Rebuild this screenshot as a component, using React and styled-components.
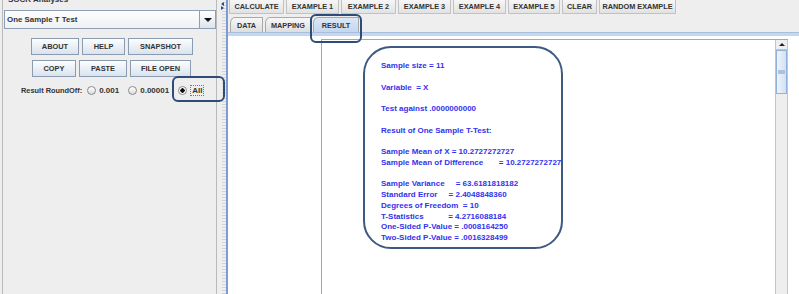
import React from 'react';
import styled, { createGlobalStyle } from 'styled-components';

const GlobalStyle = createGlobalStyle`
  body {
    margin: 0;
    background: #eeeeee;
    font-family: "Liberation Sans", Arial, sans-serif;
  }
`;

const Page = styled.div`
  position: relative;
  display: flex;
  width: 799px;
  height: 294px;
  overflow: hidden;
  background: #eeeeee;
`;

const LeftPanel = styled.div`
  width: 218px;
  flex: none;
  display: flex;
`;

const Fieldset = styled.div`
  margin-left: 2px;
  width: 213px;
  border-left: 1px solid #b9b9b9;
  border-right: 1px solid #b9b9b9;
  display: flex;
  flex-direction: column;
`;

const Legend = styled.div`
  height: 5px;
  overflow: hidden;
  padding-left: 5px;
  font-size: 8px;
  font-weight: bold;
  color: #333;
  & > span {
    display: block;
    margin-top: -5px;
    line-height: 10px;
  }
`;

const Combo = styled.div`
  margin: 5px 0 0 1px;
  height: 17px;
  display: flex;
  border: 1px solid #8e9fb3;
  background: linear-gradient(#fdfdfd, #eef1f5);
`;

const ComboText = styled.div`
  flex: 1;
  padding-left: 2px;
  font-size: 7.9px;
  font-weight: bold;
  line-height: 17px;
  color: #333;
`;

const ComboArrow = styled.div`
  width: 15px;
  border-left: 1px solid #8e9fb3;
  background: linear-gradient(#ffffff, #dbe4ee);
  display: flex;
  align-items: center;
  justify-content: center;
  &::after {
    content: '';
    border-left: 4px solid transparent;
    border-right: 4px solid transparent;
    border-top: 4px solid #111;
  }
`;

const ButtonRow = styled.div`
  display: flex;
  gap: ${p => p.$gap}px;
  padding-left: ${p => p.$left}px;
  margin-top: ${p => p.$top}px;
`;

const Button = styled.div`
  width: ${p => p.$w}px;
  height: 17px;
  box-sizing: border-box;
  border: 1px solid #8b9cb0;
  background: linear-gradient(#fcfdfe, #d9e3ee);
  font-size: 7.4px;
  font-weight: bold;
  color: #333;
  display: flex;
  align-items: center;
  justify-content: center;
`;

const RadioRow = styled.div`
  display: flex;
  align-items: center;
  margin-top: 7px;
  padding-left: 18px;
  height: 12px;
  font-size: 7.4px;
  font-weight: bold;
  color: #333;
`;

const RadioLabel = styled.span`
  margin-right: 5px;
`;

const Radio = styled.span`
  display: flex;
  align-items: center;
  gap: 3px;
  font-size: 8px;
  margin-right: ${p => p.$mr}px;
  &::before {
    content: '';
    width: 7px;
    height: 7px;
    border-radius: 50%;
    border: 1px solid #8a8a8a;
    background: ${p => (p.$on ? 'radial-gradient(circle, #111 0 2px, #fff 2.4px)' : 'linear-gradient(#fff, #dcdcdc)')};
  }
`;

const Focus = styled.span`
  border: 1px dotted ${p => (p.$on ? '#777' : 'transparent')};
  padding: 0 1px;
`;

const Splitter = styled.div`
  position: relative;
  width: 10px;
  flex: none;
  box-sizing: border-box;
  border-right: 2px solid #7b9bd2;
  background:
    repeating-linear-gradient(0deg, #d4d4d4 0 1px, transparent 1px 3px) 4px 0 / 4px 100% no-repeat,
    #eeeeee;
`;

const Arrow = styled.div`
  position: absolute;
  left: 3px;
  top: ${p => p.$top}px;
  width: 0;
  height: 0;
  border-top: 2px solid transparent;
  border-bottom: 2px solid transparent;
  ${p => (p.$dir === 'left' ? 'border-right: 3px solid #2a4a8a;' : 'border-left: 3px solid #2a4a8a;')}
`;

const RightPanel = styled.div`
  flex: 1;
  display: flex;
  flex-direction: column;
`;

const Toolbar = styled.div`
  display: flex;
  gap: 2px;
  height: 15px;
  padding-left: 1px;
`;

const ToolButton = styled.div`
  width: ${p => p.$w}px;
  height: 14px;
  box-sizing: border-box;
  border: 1px solid #c2c2c2;
  border-top: none;
  background: linear-gradient(#f6f6f6, #e2e2e2);
  font-size: 7.3px;
  font-weight: bold;
  color: #333;
  display: flex;
  align-items: center;
  justify-content: center;
`;

const TabStrip = styled.div`
  display: flex;
  align-items: flex-end;
  gap: 2px;
  height: 16px;
  padding-left: 2px;
  margin-top: 1px;
`;

const Tab = styled.div`
  width: ${p => p.$w}px;
  height: 15px;
  box-sizing: border-box;
  border: 1px solid #a9a9a9;
  border-bottom: none;
  border-top-left-radius: 5px 6px;
  background: ${p => (p.$active ? 'linear-gradient(#dbe8f6, #c3d7ee)' : 'linear-gradient(#f7f7f7, #dedede)')};
  font-size: 7.3px;
  font-weight: bold;
  color: #333;
  display: flex;
  align-items: center;
  justify-content: center;
`;

const TabLine = styled.div`
  height: 3px;
  background: #c3d7ee;
  border-top: 1px solid #a9bedb;
`;

const Content = styled.div`
  flex: 1;
  display: flex;
  background: #ffffff;
  padding: 3px 11px 0 93px;
`;

const ScrollPane = styled.div`
  flex: 1;
  display: flex;
  border-top: 1px solid #a8a8a8;
  border-left: 1px solid #a8a8a8;
`;

const Viewport = styled.div`
  flex: 1;
  padding: 6px 0 0 41px;
`;

const ResultBox = styled.div`
  width: 200px;
  height: 203px;
  box-sizing: border-box;
  border: 2px solid #3d5a82;
  border-radius: 28px;
  padding: 13px 0 0 16px;
`;

const ResultText = styled.pre`
  margin: 0;
  font-family: "Liberation Sans", Arial, sans-serif;
  font-size: 8px;
  font-weight: bold;
  line-height: 10.75px;
  color: #3232ef;
  white-space: pre;
`;

const Scrollbar = styled.div`
  width: 11px;
  display: flex;
  flex-direction: column;
  background: #eeeeee;
  border-left: 1px solid #b5c9e2;
  border-right: 1px solid #c6c6c6;
`;

const ScrollUp = styled.div`
  height: 9px;
  border-bottom: 1px solid #c6c6c6;
  display: flex;
  align-items: center;
  justify-content: center;
  &::after {
    content: '';
    border-left: 3px solid transparent;
    border-right: 3px solid transparent;
    border-bottom: 3px solid #222;
  }
`;

const Thumb = styled.div`
  height: 44px;
  box-sizing: border-box;
  border: 1px solid #8fb1da;
  background: linear-gradient(90deg, #eef4fb, #d2e1f3);
  display: flex;
  align-items: center;
  justify-content: center;
  &::after {
    content: '';
    width: 7px;
    height: 4px;
    background: #a9c0e0;
  }
`;

const Highlight = styled.div`
  position: absolute;
  left: ${p => p.$x}px;
  top: ${p => p.$y}px;
  width: ${p => p.$w}px;
  height: ${p => p.$h}px;
  box-sizing: border-box;
  border: 2px solid #2e4c78;
  border-radius: 6px;
  pointer-events: none;
`;

const tools = [
  ['CALCULATE', 55], ['EXAMPLE 1', 53], ['EXAMPLE 2', 55], ['EXAMPLE 3', 53],
  ['EXAMPLE 4', 53], ['EXAMPLE 5', 52], ['CLEAR', 35], ['RANDOM EXAMPLE', 77],
];

const result = `Sample size = 11

Variable  = X

Test against .0000000000

Result of One Sample T-Test:

Sample Mean of X = 10.2727272727
Sample Mean of Difference       = 10.2727272727

Sample Variance     = 63.6181818182
Standard Error     = 2.4048848360
Degrees of Freedom  = 10
T-Statistics           = 4.2716088184
One-Sided P-Value = .0008164250
Two-Sided P-Value = .0016328499`;

export default function App() {
  return (
    <Page>
      <GlobalStyle />
      <LeftPanel>
        <Fieldset>
          <Legend><span>SOCR Analyses</span></Legend>
          <Combo>
            <ComboText>One Sample T Test</ComboText>
            <ComboArrow />
          </Combo>
          <ButtonRow $top={9} $gap={3} $left={28}>
            <Button $w={48}>ABOUT</Button>
            <Button $w={43}>HELP</Button>
            <Button $w={65}>SNAPSHOT</Button>
          </ButtonRow>
          <ButtonRow $top={5} $gap={3} $left={29}>
            <Button $w={44}>COPY</Button>
            <Button $w={48}>PASTE</Button>
            <Button $w={61}>FILE OPEN</Button>
          </ButtonRow>
          <RadioRow>
            <RadioLabel>Result RoundOff:</RadioLabel>
            <Radio $mr={9}>0.001</Radio>
            <Radio $mr={9}>0.00001</Radio>
            <Radio $on><Focus $on>All</Focus></Radio>
          </RadioRow>
        </Fieldset>
      </LeftPanel>
      <Splitter>
        <Arrow $dir="left" $top={2} />
        <Arrow $dir="right" $top={6} />
      </Splitter>
      <RightPanel>
        <Toolbar>
          {tools.map(([t, w]) => (
            <ToolButton key={t} $w={w}>{t}</ToolButton>
          ))}
        </Toolbar>
        <TabStrip>
          <Tab $w={33}>DATA</Tab>
          <Tab $w={46}>MAPPING</Tab>
          <Tab $w={46} $active>RESULT</Tab>
        </TabStrip>
        <TabLine />
        <Content>
          <ScrollPane>
            <Viewport>
              <ResultBox>
                <ResultText>{result}</ResultText>
              </ResultBox>
            </Viewport>
            <Scrollbar>
              <ScrollUp />
              <Thumb />
            </Scrollbar>
          </ScrollPane>
        </Content>
      </RightPanel>
      <Highlight $x={172} $y={76} $w={53} $h={26} />
      <Highlight $x={310} $y={14} $w={52} $h={29} />
    </Page>
  );
}
